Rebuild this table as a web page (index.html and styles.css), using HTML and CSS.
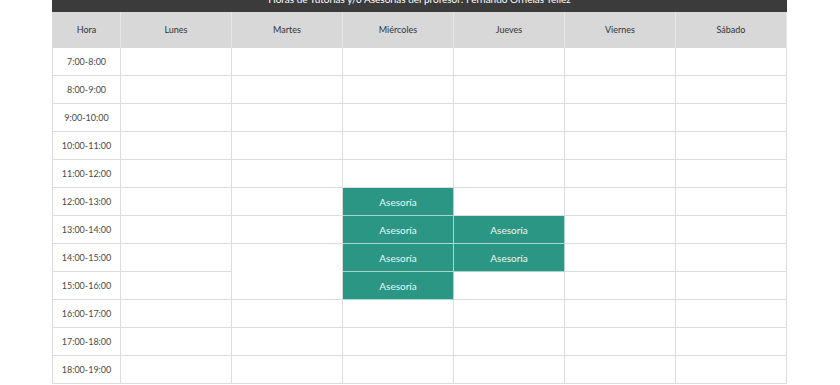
FILE: index.html
```html
<!DOCTYPE html>
<html lang="es">
<head>
<meta charset="utf-8">
<title>Horario</title>
<link rel="stylesheet" href="styles.css">
</head>
<body>
<div class="schedule">
  <div class="title">Horas de Tutorías y/o Asesorías del profesor: Fernando Ornelas Téllez</div>
  <table class="grid">
    <thead>
      <tr>
        <th class="hour-col">Hora</th>
        <th>Lunes</th>
        <th>Martes</th>
        <th>Miércoles</th>
        <th>Jueves</th>
        <th>Viernes</th>
        <th>Sábado</th>
      </tr>
    </thead>
    <tbody>
      <tr><td class="hour">7:00-8:00</td><td></td><td></td><td></td><td></td><td></td><td></td></tr>
      <tr><td class="hour">8:00-9:00</td><td></td><td></td><td></td><td></td><td></td><td></td></tr>
      <tr><td class="hour">9:00-10:00</td><td></td><td></td><td></td><td></td><td></td><td></td></tr>
      <tr><td class="hour">10:00-11:00</td><td></td><td></td><td></td><td></td><td></td><td></td></tr>
      <tr><td class="hour">11:00-12:00</td><td></td><td></td><td></td><td></td><td></td><td></td></tr>
      <tr><td class="hour">12:00-13:00</td><td></td><td></td><td class="busy">Asesoría</td><td></td><td></td><td></td></tr>
      <tr><td class="hour">13:00-14:00</td><td></td><td></td><td class="busy">Asesoría</td><td class="busy">Asesoría</td><td></td><td></td></tr>
      <tr><td class="hour">14:00-15:00</td><td></td><td rowspan="2"></td><td class="busy">Asesoría</td><td class="busy">Asesoría</td><td></td><td></td></tr>
      <tr><td class="hour">15:00-16:00</td><td></td><td class="busy">Asesoría</td><td></td><td></td><td></td></tr>
      <tr><td class="hour">16:00-17:00</td><td></td><td></td><td></td><td></td><td></td><td></td></tr>
      <tr><td class="hour">17:00-18:00</td><td></td><td></td><td></td><td></td><td></td><td></td></tr>
      <tr><td class="hour">18:00-19:00</td><td></td><td></td><td></td><td></td><td></td><td></td></tr>
    </tbody>
  </table>
</div>
</body>
</html>
```
FILE: styles.css
```css
html, body {
  margin: 0;
  padding: 0;
  background: #ffffff;
  overflow: hidden;
}

body {
  font-family: Lato, "Open Sans", sans-serif;
  color: #333333;
}

.schedule {
  width: 735px;
  margin: -12px 0 0 52px;
}

.title {
  height: 24px;
  line-height: 22px;
  background: #3b3b3b;
  color: #ffffff;
  font-size: 10px;
  text-align: center;
  white-space: nowrap;
  overflow: hidden;
}

.grid {
  width: 735px;
  table-layout: fixed;
  border-collapse: separate;
  border-spacing: 0;
  border-left: 1px solid #dcdcdc;
}

.grid th,
.grid td {
  box-sizing: border-box;
  border-right: 1px solid #dcdcdc;
  border-bottom: 1px solid #dcdcdc;
  text-align: center;
  vertical-align: middle;
  padding: 0;
}

.grid th {
  width: 111px;
  height: 36px;
  background: #d8d8d8;
  font-weight: normal;
  font-size: 9px;
  color: #333333;
  border-right-color: #e6e6e6;
  border-bottom-color: #d8d8d8;
}

.grid th.hour-col {
  width: 68px;
}

.grid td {
  height: 28px;
  font-size: 9px;
  color: #444444;
}

.grid td.hour {
  color: #4a4a4a;
}

.grid td.busy {
  background: #2a9683;
  color: #eaf6f3;
  font-size: 10px;
  border-right-color: #a9d7ce;
  border-bottom-color: #a9d7ce;
}
```
